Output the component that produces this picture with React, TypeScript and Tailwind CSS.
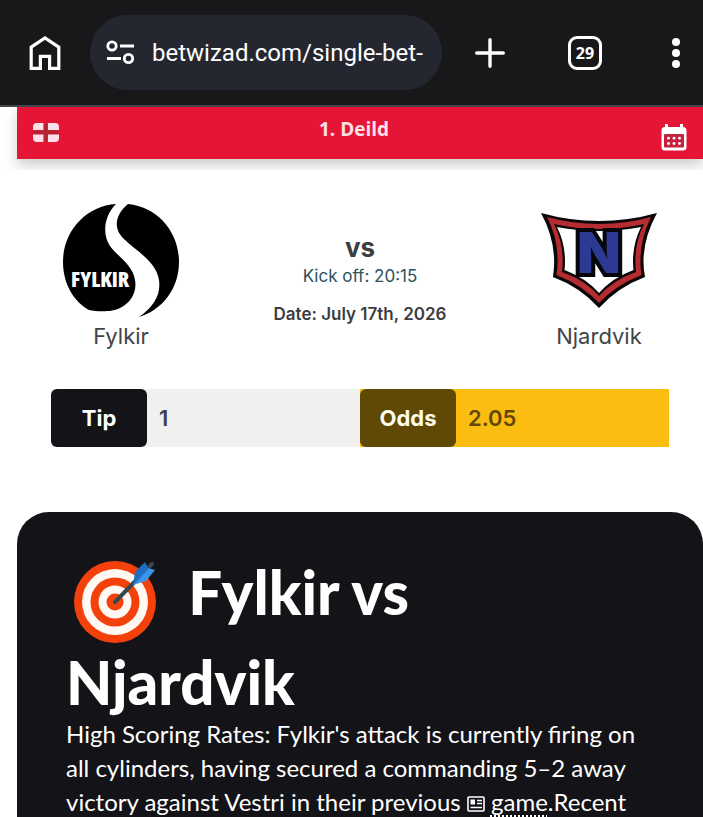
import React, { useState } from 'react';

const HomeIcon = () => (
  <svg width="32" height="36" viewBox="0 0 32 36" fill="none" stroke="#fff" strokeWidth="3.2">
    <path d="M2.2 12.2 16 2.9 29.8 12.2V33.4H20.6V21.4H11.4V33.4H2.2Z" />
  </svg>
);

const SiteSettingsIcon = () => (
  <svg width="30" height="26" viewBox="0 0 30 26" fill="none" stroke="#fff" strokeWidth="2.8">
    <circle cx="6" cy="6" r="4.2" />
    <path d="M14 6h14M1 18.500h14" />
    <circle cx="22.500" cy="18.500" r="4.200" />
  </svg>
);

const PlusIcon = () => (
  <svg width="32" height="32" viewBox="0 0 32 32" stroke="#fff" strokeWidth="3.4" strokeLinecap="round">
    <path d="M16 2.700v26.600M2.700 16h26.600" />
  </svg>
);

const DotsIcon = () => (
  <svg width="10" height="32" viewBox="0 0 10 32" fill="#fff">
    <circle cx="5" cy="5" r="4" />
    <circle cx="5" cy="16" r="4" />
    <circle cx="5" cy="27" r="4" />
  </svg>
);

const FlagIcon = () => (
  <svg width="26" height="20" viewBox="0 0 26 20">
    <rect width="26" height="19" rx="4" fill="#fde0e8" />
    <path d="M0 9.200h26M12.700 0v20" stroke="#e51635" strokeWidth="4.500" />
    <path d="M1 9.200h24M12.700 1v17" stroke="#b52231" strokeWidth="3.500" />
  </svg>
);

const CalendarIcon = () => (
  <svg width="26" height="28" viewBox="0 0 26 28">
    <path d="M4 1h3v3h12V1h3v3a3.500 3.500 0 0 1 3.500 3.500v16.500a3.500 3.500 0 0 1-3.500 3.500H4A3.500 3.500 0 0 1 .5 24V7.500A3.500 3.500 0 0 1 4 4Z" fill="#fff" />
    <rect x="3" y="11" width="20" height="13.500" rx="1" fill="#c52240" />
    <g fill="#fff">
      <circle cx="7.500" cy="15.200" r="1.400" />
      <circle cx="13" cy="15.200" r="1.400" />
      <circle cx="18.500" cy="15.200" r="1.400" />
      <circle cx="7.500" cy="20.500" r="1.400" />
      <circle cx="13" cy="20.500" r="1.400" />
      <circle cx="18.500" cy="20.500" r="1.400" />
    </g>
  </svg>
);

const FylkirLogo = () => (
  <svg width="118" height="116" viewBox="0 0 118 116">
    <path d="M54 1C24 3 1 28 1 59C1 80 11 98 27 107C36 109 51 109 58 105C70 99 75 88 73 77C71 62 55 53 48 43C40 31 42 13 54 1Z" fill="#000" />
    <path d="M66 1C96 4 117 29 117 59C117 86 100 107 77 114C92 103 99 92 97 77C94 58 74 48 62 36C50 25 54 11 66 1Z" fill="#000" />
    <text x="9" y="84" fontFamily="Open Sans, sans-serif" fontStretch="condensed" fontWeight="800" fontSize="21" fill="#fff">FYLKIR</text>
  </svg>
);

const NjardvikLogo = () => (
  <svg width="118" height="100" viewBox="0 0 118 100">
    <path d="M1 2Q30 10 59 10Q88 10 117 2Q99 35 105 66Q78 76 59 97Q40 76 13 66Q18 33 1 2Z" fill="#0b0608" />
    <path d="M7 6Q32 13 59 13Q86 13 111 6Q97 35 101.500 64Q76 74 59 92Q42 74 16.500 64Q21 33 7 6Z" fill="#b52c31" />
    <path d="M14 13Q36 18 59 18Q82 18 104 13Q93 35 96 61Q73 69 59 85Q45 69 22 61Q25 35 14 13Z" fill="#0b0608" />
    <path d="M17 16Q38 20 59 20Q80 20 101 16Q91 36 93.500 59Q72 67 59 82Q46 67 24.500 59Q27 36 17 16Z" fill="#fff" />
    <text x="59" y="62" textAnchor="middle" fontFamily="Inter, sans-serif" fontWeight="900" fontSize="57" fill="#2c3a94" stroke="#07070b" strokeWidth="8" paintOrder="stroke">N</text>
  </svg>
);

const TargetIcon = () => (
  <svg width="100" height="88" viewBox="0 0 100 88" className="inline-block align-[-33px] mr-2">
    <circle cx="49" cy="42" r="41" fill="#f4410b" />
    <circle cx="49" cy="42" r="33" fill="#fff8f3" />
    <circle cx="49" cy="42" r="24.500" fill="#f4410b" />
    <circle cx="49" cy="42" r="16.500" fill="#fff8f3" />
    <circle cx="49" cy="42" r="8.500" fill="#f4410b" />
    <path d="M49 42 86 4" stroke="#37474f" strokeWidth="4" strokeLinecap="round" />
    <path d="M67 25 69 12 79 2 82 8 80 13Z" fill="#1d6fc4" />
    <path d="M67 25 80 21 89 10 82 8Z" fill="#3b95ea" />
    <path d="M68 23 82 8" stroke="#2471bd" strokeWidth="2" />
  </svg>
);

const NewsIcon = () => (
  <svg width="18" height="16" viewBox="0 0 18 16" fill="none" stroke="#fff" className="inline-block align-[-1px]">
    <rect x="1" y="1" width="16" height="14" rx="1" strokeWidth="1.600" />
    <path d="M10 4.500h5M10 7.500h5M3.500 11.500h11.500" strokeWidth="1.400" />
    <path d="M3.500 3.500h4.500v5H3.500Z" fill="#fff" stroke="none" />
  </svg>
);

const BrowserBar: React.FC = () => {
  const [url, setUrl] = useState('betwizad.com/single-bet-');

  return (
    <header className="flex items-center h-[107px] shrink-0 bg-[#18181a] border-b-2 border-[#45454c] text-white">
      <button aria-label="Home" className="w-[90px] flex justify-center">
        <HomeIcon />
      </button>
      <div className="flex-1 min-w-0 h-[75px] rounded-full bg-[#242730] flex items-center gap-4 pl-4">
        <button aria-label="Site settings" className="shrink-0">
          <SiteSettingsIcon />
        </button>
        <input
          aria-label="Address"
          value={url}
          onChange={(e) => setUrl(e.target.value)}
          className="flex-1 min-w-0 bg-transparent outline-none font-['Roboto',sans-serif] text-2xl"
        />
      </div>
      <button aria-label="New tab" className="w-24 flex justify-center">
        <PlusIcon />
      </button>
      <button aria-label="Tabs" className="w-[94px] flex justify-center">
        <span className="size-[34px] rounded-[9px] border-[3px] border-white flex items-center justify-center font-['Open_Sans',sans-serif] font-bold text-base leading-none">
          29
        </span>
      </button>
      <button aria-label="Menu" className="w-[71px] flex justify-end pr-[22px]">
        <DotsIcon />
      </button>
    </header>
  );
};

const Team: React.FC<{ name: string; children: React.ReactNode }> = ({ name, children }) => (
  <div className="w-[140px] flex flex-col items-center">
    <div className="h-[120px] flex items-center">{children}</div>
    <p className="text-[22px] leading-[30px] text-[#424448]">{name}</p>
  </div>
);

const App: React.FC = () => {
  return (
    <div className="h-screen flex flex-col overflow-hidden bg-white font-['Inter',sans-serif]">
      <BrowserBar />

      <main className="flex-1 min-h-0 pl-[17px] flex flex-col">
        <div className="h-[63px] shrink-0 -ml-4 pl-4 overflow-hidden">
          <div className="h-[52px] px-4 flex items-center justify-between bg-[#e51635] shadow-[0_6px_12px_rgba(0,0,0,0.2)]">
            <FlagIcon />
            <h2 className="pb-2 pr-3 font-['Open_Sans',sans-serif] font-bold text-[19px] text-[#fde0e8]">1. Deild</h2>
            <button aria-label="Calendar" className="pt-2">
              <CalendarIcon />
            </button>
          </div>
        </div>

        <section className="px-[34px] pt-[31px] shrink-0">
          <div className="flex justify-between">
            <Team name="Fylkir">
              <FylkirLogo />
            </Team>
            <div className="pt-8 text-center text-[#3c3d41]">
              <p className="text-[26px] leading-[30px] font-bold">vs</p>
              <p className="text-[17px] leading-[26px] text-[#2c5260]">Kick off: 20:15</p>
              <p className="pt-3 text-[17px] leading-[26px] font-semibold">Date: July 17th, 2026</p>
            </div>
            <Team name="Njardvik">
              <NjardvikLogo />
            </Team>
          </div>

          <dl className="mt-[38px] grid grid-cols-2 h-[58px] text-[22px] font-bold">
            <div className="flex bg-[#f0f0ee]">
              <dt className="w-24 flex items-center justify-center rounded-md bg-[#141318] text-white">Tip</dt>
              <dd className="pl-3 flex items-center font-semibold text-[#3b424a]">1</dd>
            </div>
            <div className="flex bg-[#fcbd13]">
              <dt className="w-24 flex items-center justify-center rounded-md bg-[#5f4905] text-[#fffbea]">Odds</dt>
              <dd className="pl-3 flex items-center font-semibold text-[#5f4905]">2.05</dd>
            </div>
          </dl>
        </section>

        <article className="mt-[65px] flex-1 rounded-t-[32px] bg-[#141318] px-[49px] pt-[46px] text-white font-['Lato',sans-serif]">
          <h1 className="text-[60px] leading-[69px] font-black">
            <TargetIcon /> Fylkir vs
            <br />
            Njardvik
          </h1>
          <p className="text-2xl leading-[34px]">
            High Scoring Rates: Fylkir's attack is currently firing on
            <br />
            all cylinders, having secured a commanding 5–2 away
            <br />
            victory against Vestri in their previous <NewsIcon />{' '}
            <a href="#game" className="underline decoration-dotted decoration-2 underline-offset-4">game</a>.Recent
          </p>
        </article>
      </main>
    </div>
  );
};

export default App;
